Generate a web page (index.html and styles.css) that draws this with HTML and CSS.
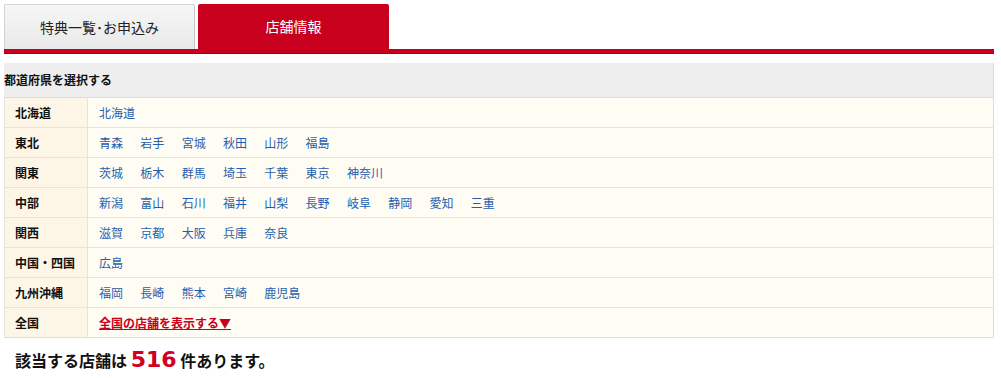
FILE: index.html
```html
<!DOCTYPE html>
<html lang="ja">
<head>
<meta charset="utf-8">
<link rel="stylesheet" href="styles.css">
</head>
<body>
<div class="wrap">
  <div class="tabs">
    <div class="tab tab-off">特典一覧･お申込み</div>
    <div class="tab tab-on">店舗情報</div>
  </div>
  <div class="tabbar"></div>
  <div class="area">
    <div class="area-head">都道府県を選択する</div>
    <div class="row"><div class="label">北海道</div><div class="links"><a>北海道</a></div></div>
    <div class="row"><div class="label">東北</div><div class="links"><a>青森</a><a>岩手</a><a>宮城</a><a>秋田</a><a>山形</a><a>福島</a></div></div>
    <div class="row"><div class="label">関東</div><div class="links"><a>茨城</a><a>栃木</a><a>群馬</a><a>埼玉</a><a>千葉</a><a>東京</a><a>神奈川</a></div></div>
    <div class="row"><div class="label">中部</div><div class="links"><a>新潟</a><a>富山</a><a>石川</a><a>福井</a><a>山梨</a><a>長野</a><a>岐阜</a><a>静岡</a><a>愛知</a><a>三重</a></div></div>
    <div class="row"><div class="label">関西</div><div class="links"><a>滋賀</a><a>京都</a><a>大阪</a><a>兵庫</a><a>奈良</a></div></div>
    <div class="row"><div class="label">中国・四国</div><div class="links"><a>広島</a></div></div>
    <div class="row"><div class="label">九州沖縄</div><div class="links"><a>福岡</a><a>長崎</a><a>熊本</a><a>宮崎</a><a>鹿児島</a></div></div>
    <div class="row"><div class="label">全国</div><div class="links"><a class="all">全国の店舗を表示する▼</a></div></div>
  </div>
  <p class="result">該当する店舗は <span class="num">516</span> 件あります。</p>
</div>
</body>
</html>
```
FILE: styles.css
```css
html, body {
  margin: 0;
  padding: 0;
  background: #fff;
}
body {
  font-family: "Noto Sans CJK JP", "Noto Sans", sans-serif;
  color: #111;
}
.wrap {
  width: 990px;
  margin-left: 4px;
  padding-top: 4px;
}
.tabs {
  display: flex;
  gap: 3px;
  height: 45px;
}
.tab {
  width: 191px;
  box-sizing: border-box;
  display: flex;
  align-items: center;
  justify-content: center;
  font-size: 14px;
  line-height: 1;
  padding-bottom: 1px;
  border-radius: 2px 2px 0 0;
}
.tab-off {
  background: linear-gradient(#f6f6f6, #e9e9e9);
  border: 1px solid #d3d3d3;
  border-bottom: none;
  border-right-color: #c6c6c6;
  color: #222;
}
.tab-on {
  background: #c8001e;
  color: #fff;
}
.tabbar {
  height: 4px;
  background: #c8001e;
  border-bottom: 1px solid #a5001a;
}
.area {
  margin-top: 9px;
  width: 989px;
  border-right: 1px solid #dddddd;
  border-bottom: 1px solid #dddddd;
}
.area-head {
  height: 34px;
  background: #eeeeee;
  border-bottom: 1px solid #dcdcdc;
  font-size: 12px;
  font-weight: bold;
  line-height: 34px;
}
.row {
  display: flex;
  height: 29px;
  border-bottom: 1px solid #e3e3e3;
  border-left: 1px solid #e3e3e3;
  background: #fffcf4;
}
.row:last-child {
  border-bottom: none;
}
.label {
  width: 72px;
  flex: none;
  padding-left: 10px;
  background: #fdf6e6;
  border-right: 1px solid #e6e3dc;
  font-size: 12px;
  font-weight: bold;
  line-height: 29px;
}
.links {
  display: flex;
  align-items: center;
  padding-left: 11px;
  font-size: 12px;
  line-height: 1;
}
.links a {
  color: #1f5fae;
  margin-right: 17.3px;
  text-decoration: none;
}
.links a.all {
  color: #c8001e;
  font-weight: bold;
  text-decoration: underline;
}
.result {
  margin: 8px 0 0 11px;
  font-size: 16px;
  font-weight: bold;
  line-height: 28px;
}
.num {
  font-family: "DejaVu Sans", Verdana, sans-serif;
  font-size: 22px;
  color: #d0001e;
}
```
